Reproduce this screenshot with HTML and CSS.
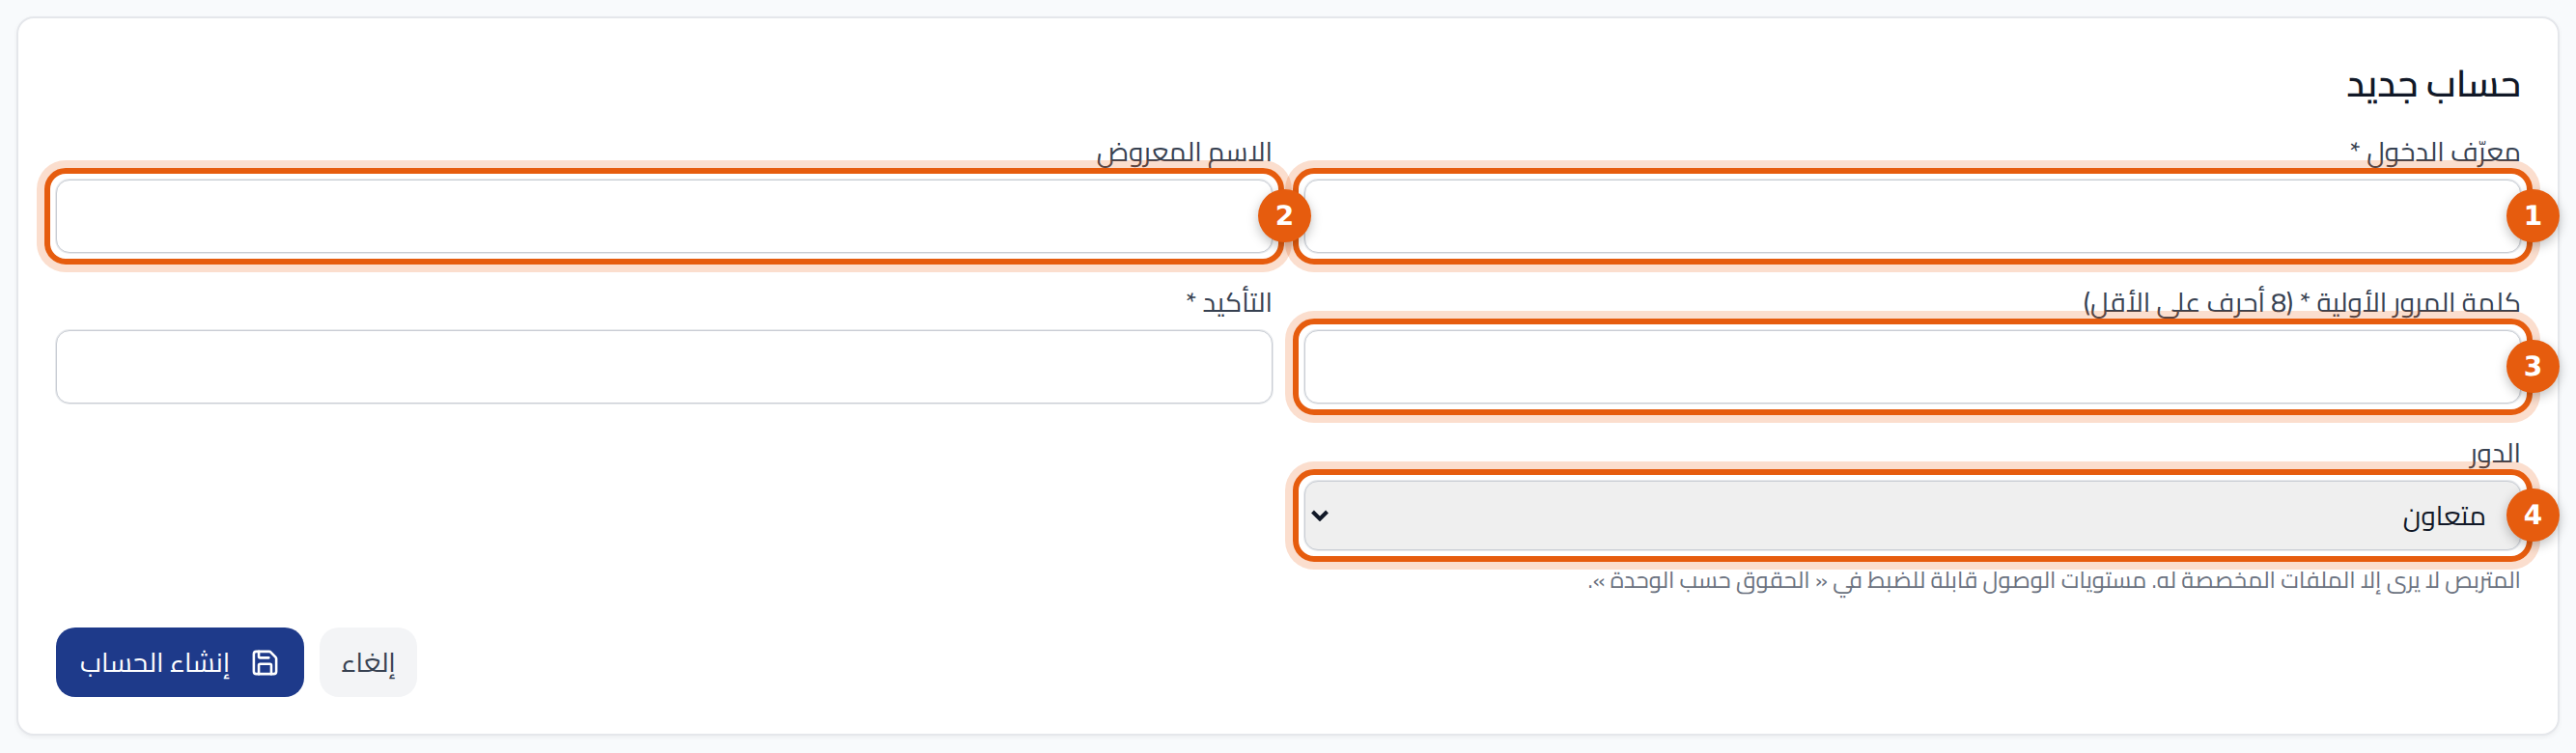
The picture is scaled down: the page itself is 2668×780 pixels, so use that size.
FILE: index.html
```html
<!DOCTYPE html>
<html lang="ar" dir="rtl">
<head>
<meta charset="UTF-8">
<meta name="viewport" content="width=device-width, initial-scale=1.0">
<title>حساب جديد</title>
<link rel="stylesheet" href="styles.css">
</head>
<body>

<div class="card">
  <h2>حساب جديد</h2>

  <div class="form-grid">
    <div class="field">
      <label>معرّف الدخول *</label>
      <div class="spot">
        <input type="text">
        <span class="ring"></span>
        <span class="badge">1</span>
      </div>
    </div>
    <div class="field">
      <label>الاسم المعروض</label>
      <div class="spot">
        <input type="text">
        <span class="ring"></span>
        <span class="badge">2</span>
      </div>
    </div>
    <div class="field">
      <label>كلمة المرور الأولية * (8 أحرف على الأقل)</label>
      <div class="spot">
        <input type="password">
        <span class="ring"></span>
        <span class="badge">3</span>
      </div>
    </div>
    <div class="field">
      <label>التأكيد *</label>
      <div class="spot">
        <input type="password">
      </div>
    </div>
    <div class="field">
      <label>الدور</label>
      <div class="spot">
        <select>
          <option>متعاون</option>
          <option>متربص</option>
        </select>
        <svg class="chevron" viewBox="0 0 18 12" width="18" height="12" fill="none" stroke="currentColor" stroke-width="4">
          <path d="M1.5 2 L9 9.5 L16.5 2"/>
        </svg>
        <span class="ring"></span>
        <span class="badge">4</span>
      </div>
      <p class="hint">المتربص لا يرى إلا الملفات المخصصة له. مستويات الوصول قابلة للضبط في « الحقوق حسب الوحدة ».</p>
    </div>
  </div>

  <div class="actions">
    <button type="button" class="btn-cancel">إلغاء</button>
    <button type="button" class="btn-save">
      <svg viewBox="0 0 24 24" width="31" height="31" fill="none" stroke="currentColor" stroke-width="2" stroke-linecap="round" stroke-linejoin="round">
        <path d="M15.2 3a2 2 0 0 1 1.4.6l3.8 3.8a2 2 0 0 1 .6 1.4V19a2 2 0 0 1-2 2H5a2 2 0 0 1-2-2V5a2 2 0 0 1 2-2z"/>
        <path d="M17 21v-7a1 1 0 0 0-1-1H8a1 1 0 0 0-1 1v7"/>
        <path d="M7 3v4a1 1 0 0 0 1 1h7"/>
      </svg>
      إنشاء الحساب
    </button>
  </div>
</div>

</body>
</html>
```

FILE: styles.css
```css
* {
  box-sizing: border-box;
}

body {
  margin: 0;
  padding: 17px;
  background-color: #f8fafc;
  font-family: "Cairo", "Noto Sans Arabic", "Noto Kufi Arabic", "Noto Sans", "DejaVu Sans", sans-serif;
  color: #111827;
  text-rendering: geometricPrecision;
}

/* Card */
.card {
  height: 745px;
  padding: 46px 38px 0 39px;
  background-color: #fff;
  border: 2px solid #e5e7eb;
  border-radius: 18px;
  box-shadow: 0 2px 4px rgba(0, 0, 0, 0.05);
}

.card h2 {
  margin: 0 0 33px;
  font-size: 38.4px;
  line-height: 42px;
  font-weight: 600;
}

/* Form */
.form-grid {
  display: grid;
  grid-template-columns: 1fr 1fr;
  column-gap: 33px;
  row-gap: 34px;
}

.field label {
  display: block;
  height: 40px;
  margin-bottom: 6px;
  font-size: 28px;
  line-height: 34px;
  color: #374151;
}

.spot {
  position: relative;
}

.field input,
.field select {
  display: block;
  width: 100%;
  height: 76px;
  padding: 0 26px;
  border: 1px solid #c9cdd4;
  border-radius: 14px;
  box-shadow: 0 0 0 1px rgba(209, 213, 219, 0.5);
  background-color: #fff;
  font-family: inherit;
  font-size: 28px;
}

.field select {
  height: 72px;
  padding: 0 35px 0 40px;
  appearance: none;
  background-color: #efefef;
  color: #111827;
}

.chevron {
  position: absolute;
  top: 30px;
  left: 7px;
  color: #111827;
  pointer-events: none;
}

/* Highlight */
.ring {
  position: absolute;
  inset: -12px;
  border: 6px solid #e65c0e;
  border-radius: 22px;
  box-shadow: 0 0 0 8px rgba(234, 88, 12, 0.2);
  pointer-events: none;
}

.badge {
  position: absolute;
  top: 50%;
  right: -40px;
  width: 55px;
  height: 55px;
  margin-top: -28px;
  border-radius: 50%;
  background-color: #e65c0e;
  color: #fff;
  font-family: "DejaVu Sans", sans-serif;
  font-size: 28px;
  font-weight: 700;
  line-height: 55px;
  text-align: center;
  box-shadow: 0 4px 12px rgba(0, 0, 0, 0.25);
}

.hint {
  margin: 16px 0 5px;
  font-size: 23.8px;
  line-height: 30px;
  color: #6b7280;
}

/* Buttons */
.actions {
  display: flex;
  justify-content: flex-end;
  gap: 16px;
  margin-top: 29px;
}

.actions button {
  display: flex;
  align-items: center;
  gap: 21px;
  height: 72px;
  padding: 0 25px;
  border: none;
  border-radius: 20px;
  font-family: inherit;
  font-size: 28px;
}

.actions .btn-cancel {
  padding: 0 22px;
  background-color: #f3f4f6;
  color: #374151;
}

.btn-save {
  background-color: #1e3a8a;
  color: #fff;
}
```
